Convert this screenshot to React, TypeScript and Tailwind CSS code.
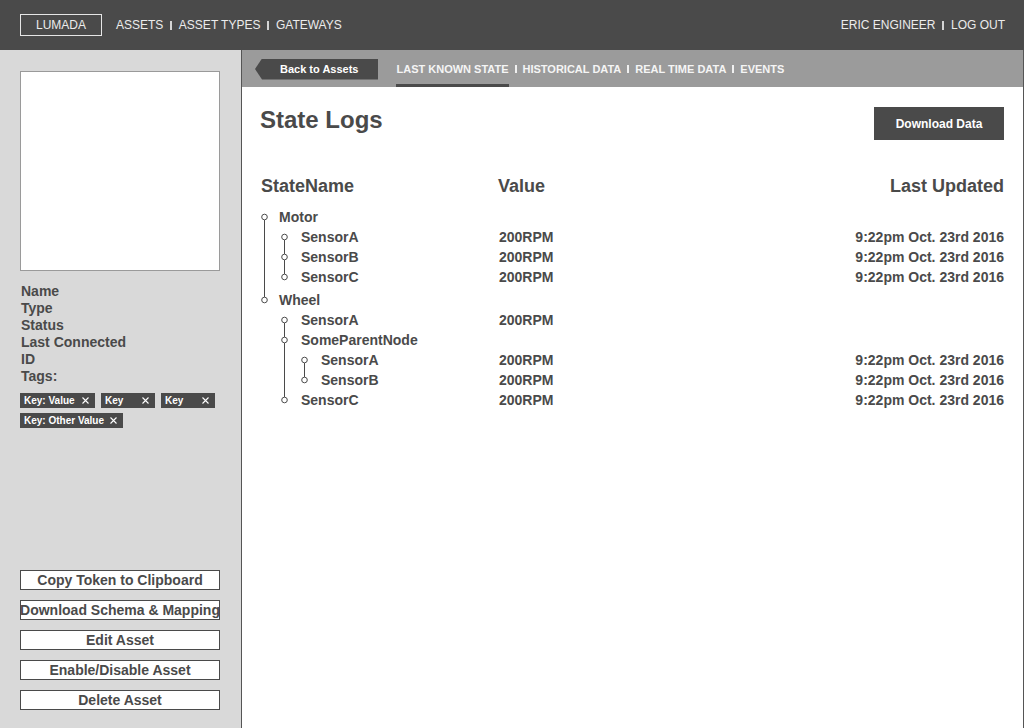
import React from "react";

type Row = {
  name: string;
  depth: number;
  value?: string;
  date?: string;
  tall?: boolean;
};

const DATE = "9:22pm Oct. 23rd 2016";

const rows: Row[] = [
  { name: "Motor", depth: 0 },
  { name: "SensorA", depth: 1, value: "200RPM", date: DATE },
  { name: "SensorB", depth: 1, value: "200RPM", date: DATE },
  { name: "SensorC", depth: 1, value: "200RPM", date: DATE },
  { name: "Wheel", depth: 0, tall: true },
  { name: "SensorA", depth: 1, value: "200RPM" },
  { name: "SomeParentNode", depth: 1 },
  { name: "SensorA", depth: 2, value: "200RPM", date: DATE },
  { name: "SensorB", depth: 2, value: "200RPM", date: DATE },
  { name: "SensorC", depth: 1, value: "200RPM", date: DATE },
];

const tags = [
  { label: "Key: Value", w: "w-[75px]" },
  { label: "Key", w: "w-[54px]" },
  { label: "Key", w: "w-[54px]" },
  { label: "Key: Other Value", w: "w-[103px]" },
];

const actions = [
  "Copy Token to Clipboard",
  "Download Schema & Mapping",
  "Edit Asset",
  "Enable/Disable Asset",
  "Delete Asset",
];

// does a sibling at `depth` come before / after row i
const hasPrev = (i: number, depth: number) => {
  for (let j = i - 1; j >= 0; j--) {
    if (rows[j].depth < depth) return false;
    if (rows[j].depth === depth) return true;
  }
  return false;
};

const hasNext = (i: number, depth: number) => {
  for (let j = i + 1; j < rows.length; j++) {
    if (rows[j].depth < depth) return false;
    if (rows[j].depth === depth) return true;
  }
  return false;
};

const TreeCell = ({ index, level, h }: { index: number; level: number; h: number }) => {
  const row = rows[index];
  const cy = h - 10;
  const x = 4.5;
  if (level < row.depth) {
    const pass = hasNext(index, level);
    return (
      <svg width="20" height={h} className="shrink-0 block">
        {pass && <line x1={x} y1={0} x2={x} y2={h} stroke="#4a4a4a" strokeWidth="1" />}
      </svg>
    );
  }
  return (
    <svg width="20" height={h} className="shrink-0 block">
      {hasPrev(index, level) && <line x1={x} y1={0} x2={x} y2={cy - 3} stroke="#4a4a4a" strokeWidth="1" />}
      {hasNext(index, level) && <line x1={x} y1={cy + 3} x2={x} y2={h} stroke="#4a4a4a" strokeWidth="1" />}
      <circle cx={x} cy={cy} r="2.8" fill="white" stroke="#4a4a4a" strokeWidth="1" />
    </svg>
  );
};

const Sep = ({ className }: { className: string }) => <span className={className} />;

const CloseX = () => (
  <svg width="7" height="7" viewBox="0 0 7 7" className="shrink-0">
    <path d="M0.5 0.5L6.5 6.5M6.5 0.5L0.5 6.5" stroke="white" strokeWidth="1.1" />
  </svg>
);

export default function App() {
  return (
    <div className="h-screen w-full flex flex-col font-['Liberation_Sans',Arial,sans-serif] text-[#4a4a4a]">
      <header className="h-[50px] shrink-0 bg-[#4a4a4a] flex items-center justify-between pl-[20px] pr-[19px] text-[12px] text-[#ececec]">
        <div className="flex items-center">
          <div className="w-[82px] h-[22px] border border-[#e6e6e6] flex items-center justify-center">LUMADA</div>
          <nav className="ml-[14px] flex items-center">
            ASSETS
            <Sep className="inline-block w-[1.5px] h-[9px] bg-[#d4d4d4] mx-[7px]" />
            ASSET TYPES
            <Sep className="inline-block w-[1.5px] h-[9px] bg-[#d4d4d4] mx-[7px]" />
            GATEWAYS
          </nav>
        </div>
        <div className="flex items-center">
          ERIC ENGINEER
          <Sep className="inline-block w-[1.5px] h-[9px] bg-[#d4d4d4] mx-[7px]" />
          LOG OUT
        </div>
      </header>

      <div className="flex flex-1 min-h-0">
        <aside className="w-[241px] shrink-0 bg-[#d9d9d9] flex flex-col px-[20px] pt-[21px] pb-[18px]">
          <div className="w-[200px] h-[200px] bg-white border border-[#9a9a9a]" />
          <div className="mt-[12px] pl-[1px] text-[14px] font-bold leading-[17px]">
            <p>Name</p>
            <p>Type</p>
            <p>Status</p>
            <p>Last Connected</p>
            <p>ID</p>
            <p>Tags:</p>
          </div>
          <div className="mt-[8px] flex flex-wrap gap-x-[6px] gap-y-[5px]">
            {tags.map((t, i) => (
              <div
                key={i}
                className={`${t.w} h-[15px] bg-[#4a4a4a] text-white text-[10px] font-bold flex items-center justify-between pl-[4px] pr-[6px]`}
              >
                <span>{t.label}</span>
                <CloseX />
              </div>
            ))}
          </div>
          <div className="mt-auto flex flex-col gap-[10px]">
            {actions.map((a) => (
              <button
                key={a}
                className="w-[200px] h-[20px] bg-white border border-[#4a4a4a] text-[14px] font-bold flex items-center justify-center whitespace-nowrap"
              >
                {a}
              </button>
            ))}
          </div>
        </aside>

        <main className="flex-1 flex flex-col bg-white border-l border-r border-[#555555]">
          <div className="h-[37px] shrink-0 bg-[#9b9b9b] flex items-stretch pl-[13px] text-[11px] font-bold text-[#f5f5f5]">
            <button className="self-center mt-[1px] h-[21px] bg-[#4a4a4a] pl-[25px] pr-[20px] flex items-center text-white [clip-path:polygon(7px_0,100%_0,100%_100%,7px_100%,0_50%)]">
              Back to Assets
            </button>
            <div className="ml-[18px] flex items-stretch pt-[1px]">
              <span className="flex items-center border-t-[3px] border-b-[3px] border-t-transparent border-b-[#4a4a4a]">
                LAST KNOWN STATE
              </span>
              <span className="flex items-center">
                <Sep className="inline-block w-[2px] h-[8px] bg-[#f0f0f0] mx-[6px]" />
              </span>
              <span className="flex items-center">HISTORICAL DATA</span>
              <span className="flex items-center">
                <Sep className="inline-block w-[2px] h-[8px] bg-[#f0f0f0] mx-[6px]" />
              </span>
              <span className="flex items-center">REAL TIME DATA</span>
              <span className="flex items-center">
                <Sep className="inline-block w-[2px] h-[8px] bg-[#f0f0f0] mx-[6px]" />
              </span>
              <span className="flex items-center">EVENTS</span>
            </div>
          </div>

          <section className="pl-[18px] pr-[19px] pt-[19px]">
            <div className="flex items-start justify-between">
              <h1 className="text-[24px] leading-[28px] font-bold">State Logs</h1>
              <button className="mt-[1px] w-[130px] h-[33px] bg-[#4a4a4a] text-white text-[12px] font-bold flex items-center justify-center">
                Download Data
              </button>
            </div>

            <div className="mt-[35px] flex text-[18px] leading-[22px] font-bold">
              <div className="w-[238px] pl-[1px]">StateName</div>
              <div className="w-[160px]">Value</div>
              <div className="flex-1 text-right">Last Updated</div>
            </div>

            <div className="mt-[10px] text-[14px] font-bold">
              {rows.map((r, i) => {
                const h = r.tall ? 23 : 20;
                const levels = Array.from({ length: r.depth + 1 }, (_, k) => k);
                return (
                  <div key={i} className={`flex ${r.tall ? "h-[23px]" : "h-[20px]"}`}>
                    <div className="w-[238px] flex">
                      {levels.map((k) => (
                        <TreeCell key={k} index={i} level={k} h={h} />
                      ))}
                      <span
                        className={`self-end h-[20px] leading-[20px] whitespace-nowrap ${
                          r.depth === 0 ? "-ml-[1px]" : "ml-[1px]"
                        }`}
                      >
                        {r.name}
                      </span>
                    </div>
                    <div className="w-[160px] self-end h-[20px] leading-[20px] pl-[1px]">{r.value}</div>
                    <div className="flex-1 self-end h-[20px] leading-[20px] text-right">{r.date}</div>
                  </div>
                );
              })}
            </div>
          </section>
        </main>
      </div>
    </div>
  );
}
